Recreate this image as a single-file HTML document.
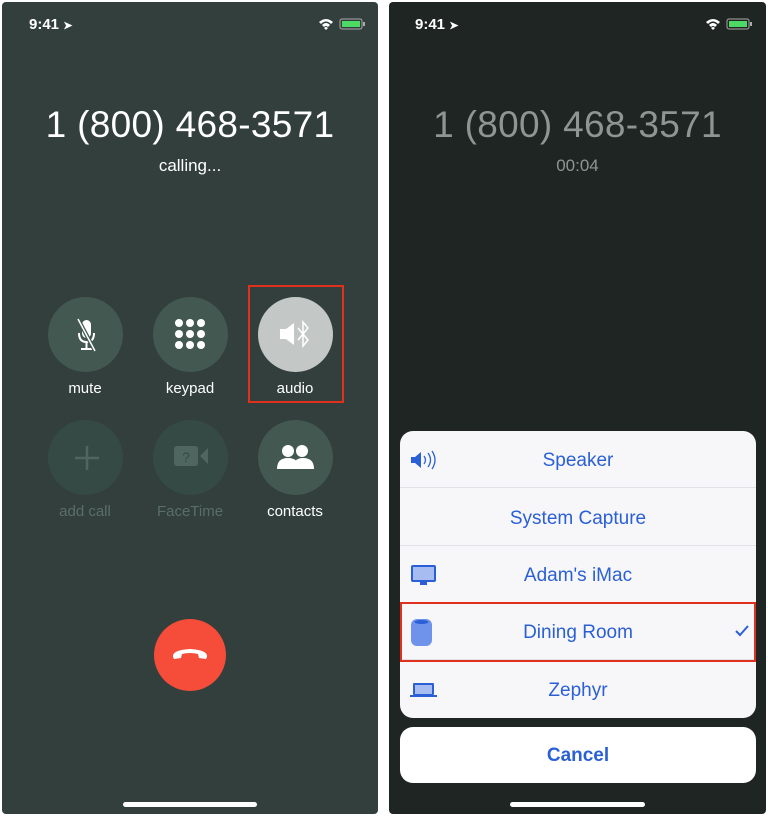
<!DOCTYPE html>
<html><head><meta charset="utf-8"><style>
*{margin:0;padding:0;box-sizing:border-box}
body{width:768px;height:817px;background:#fff;position:relative;overflow:hidden;font-family:"Liberation Sans",sans-serif}
.p{position:absolute;top:2px;height:812px;border-radius:4px;overflow:hidden}
#L{left:2px;width:376px;background:#323f3c}
#R{left:389px;width:377px;background:#1e2523}
.a{position:absolute}
.t{position:absolute;text-align:center;width:100%}
.st{position:absolute;top:14px;font-size:15px;font-weight:bold;color:#fff}
.c{position:absolute;width:75px;height:75px;border-radius:50%;background:#435851}
.lb{position:absolute;width:120px;text-align:center;font-size:15px;color:#fff}
.hb{position:absolute;height:5px;border-radius:3px;background:#fff;top:800px}
.row{position:absolute;left:0;width:356px;height:57px;border-bottom:1px solid #e2e2e6;text-align:center;line-height:59px;font-size:19px;color:#2a5fd6}
.num{position:absolute;text-align:center;width:100%;top:102px;font-size:37px;letter-spacing:0.3px}
</style></head><body>
<div class="p" id="L">
 <div class="st" style="left:27px">9:41 <span style="font-size:11px">➤</span></div>
 <svg class="a" style="left:316px;top:15px" width="48" height="14"><path d="M1 5 Q8 -1 15 5 L13 7 Q8 2 3 7Z M4 8 Q8 4 12 8 L10 10 Q8 8 6 10Z M8 13 L6 11 Q8 9 10 11Z" fill="#fff"/><rect x="22" y="2" width="22" height="10" rx="2" fill="none" stroke="#aaa"/><rect x="24" y="4" width="18" height="6" fill="#4cd964"/><rect x="45" y="5" width="2" height="4" fill="#aaa"/></svg>
 <div class="num" style="color:#fff">1 (800) 468-3571</div>
 <div class="t" style="top:154px;font-size:17px;color:#fff">calling...</div>
 <div class="c" style="left:46px;top:295px"></div>
 <svg class="a" style="left:72px;top:316px" width="24" height="34"><rect x="8" y="2" width="9" height="18" rx="4.5" fill="#fff"/><path d="M5 15 Q5 24 12.5 24 Q20 24 20 15 M12.5 24 V30 M7 31 H18" stroke="#fff" stroke-width="2" fill="none"/><path d="M4 1 L21 33" stroke="#435851" stroke-width="4"/><path d="M4 1 L21 33" stroke="#fff" stroke-width="1.5"/></svg>
 <div class="c" style="left:151px;top:295px"></div>
 <svg class="a" style="left:173px;top:317px" width="32" height="32"><g fill="#fff"><circle cx="4" cy="4" r="4"/><circle cx="15" cy="4" r="4"/><circle cx="26" cy="4" r="4"/><circle cx="4" cy="15" r="4"/><circle cx="15" cy="15" r="4"/><circle cx="26" cy="15" r="4"/><circle cx="4" cy="26" r="4"/><circle cx="15" cy="26" r="4"/><circle cx="26" cy="26" r="4"/></g></svg>
 <div class="c" style="left:256px;top:295px;background:#c3c8c6"></div>
 <svg class="a" style="left:276px;top:318px" width="36" height="30"><path d="M2 9 H8 L16 3 V25 L8 19 H2Z" fill="#fff"/><path d="M20 8 L30 20 L25 26 V2 L30 8 L20 20" stroke="#fff" stroke-width="1.5" fill="none"/></svg>
 <div class="a" style="left:246px;top:283px;width:96px;height:118px;border:2px solid #e0301e"></div>
 <div class="lb" style="left:23px;top:378px">mute</div>
 <div class="lb" style="left:128px;top:378px">keypad</div>
 <div class="lb" style="left:233px;top:378px">audio</div>
 <div class="c" style="left:46px;top:418px;background:#364a45"></div>
 <svg class="a" style="left:71px;top:442px" width="28" height="28"><path d="M14 2V26M2 14H26" stroke="#4f6660" stroke-width="2.5"/></svg>
 <div class="c" style="left:151px;top:418px;background:#364a45"></div>
 <svg class="a" style="left:171px;top:443px" width="38" height="22"><rect x="1" y="1" width="24" height="20" rx="3" fill="#4f6660"/><text x="13" y="17" font-size="14" text-anchor="middle" fill="#364a45" font-family="Liberation Sans">?</text><path d="M27 11 L35 3 V19Z" fill="#4f6660"/></svg>
 <div class="c" style="left:256px;top:418px"></div>
 <svg class="a" style="left:274px;top:441px" width="40" height="28"><g fill="#fff"><circle cx="12" cy="8" r="6"/><path d="M1 26 Q1 15 12 15 Q23 15 23 26Z"/><circle cx="26" cy="8" r="6" /><path d="M17 26 Q17 15 27 15 Q38 15 38 26Z"/></g></svg>
 <div class="lb" style="left:23px;top:501px;color:#5a6e69">add call</div>
 <div class="lb" style="left:128px;top:501px;color:#5a6e69">FaceTime</div>
 <div class="lb" style="left:233px;top:501px">contacts</div>
 <div class="c" style="left:152px;top:617px;width:72px;height:72px;background:#f54d3a"></div>
 <svg class="a" style="left:168px;top:642px" width="40" height="20"><path d="M3 13 Q2 6 20 5 Q38 6 37 13 L36 15 L29 14 L28 10 Q20 8 12 10 L11 14 L4 15Z" fill="#fff"/></svg>
 <div class="hb" style="left:121px;width:134px"></div>
</div>
<div class="p" id="R">
 <div class="st" style="left:26px">9:41 <span style="font-size:11px">➤</span></div>
 <svg class="a" style="left:316px;top:15px" width="48" height="14"><path d="M1 5 Q8 -1 15 5 L13 7 Q8 2 3 7Z M4 8 Q8 4 12 8 L10 10 Q8 8 6 10Z M8 13 L6 11 Q8 9 10 11Z" fill="#fff"/><rect x="22" y="2" width="22" height="10" rx="2" fill="none" stroke="#aaa"/><rect x="24" y="4" width="18" height="6" fill="#4cd964"/><rect x="45" y="5" width="2" height="4" fill="#aaa"/></svg>
 <div class="num" style="color:#8f9593">1 (800) 468-3571</div>
 <div class="t" style="top:154px;font-size:17px;color:#8f9593">00:04</div>
 <div class="a" style="left:11px;top:429px;width:356px;height:287px;border-radius:13px;background:#f7f7f9;overflow:hidden">
  <div class="row" style="top:0">Speaker</div>
  <div class="row" style="top:58px">System Capture</div>
  <div class="row" style="top:115px">Adam's iMac</div>
  <div class="row" style="top:172px">Dining Room</div>
  <div class="row" style="top:230px;border:0">Zephyr</div>
  <svg class="a" style="left:10px;top:19px" width="30" height="20"><path d="M1 7H5L11 2V18L5 13H1Z" fill="#2a5fd6"/><path d="M14 6Q17 10 14 14M18 3Q23 10 18 17M22 1Q28 10 22 19" stroke="#2a5fd6" stroke-width="1.3" fill="none"/></svg>
  <svg class="a" style="left:10px;top:133px" width="28" height="24"><rect x="1" y="1" width="25" height="17" rx="2" fill="#2a5fd6"/><rect x="3" y="3" width="21" height="13" fill="#a7bdf2"/><rect x="10" y="18" width="7" height="3" fill="#2a5fd6"/></svg>
  <svg class="a" style="left:10px;top:187px" width="24" height="30"><rect x="1" y="1" width="21" height="27" rx="6" fill="#6f92ea"/><ellipse cx="11.5" cy="4" rx="7" ry="2" fill="#2a5fd6"/></svg>
  <svg class="a" style="left:335px;top:194px" width="14" height="12"><path d="M1 6L5 10L13 1" stroke="#2a5fd6" stroke-width="2" fill="none"/></svg>
  <svg class="a" style="left:10px;top:251px" width="28" height="16"><rect x="3" y="1" width="21" height="12" rx="1" fill="#2a5fd6"/><rect x="5" y="3" width="17" height="9" fill="#a7bdf2"/><rect x="0" y="13" width="27" height="2" fill="#2a5fd6"/></svg>
 </div>
 <div class="a" style="left:11px;top:600px;width:356px;height:60px;border:2px solid #e0301e"></div>
 <div class="a" style="left:11px;top:725px;width:356px;height:56px;border-radius:13px;background:#fff;text-align:center;line-height:58px;font-size:19px;font-weight:bold;color:#2a5fd6">Cancel</div>
 <div class="hb" style="left:121px;width:135px"></div>
</div>
</body></html>
